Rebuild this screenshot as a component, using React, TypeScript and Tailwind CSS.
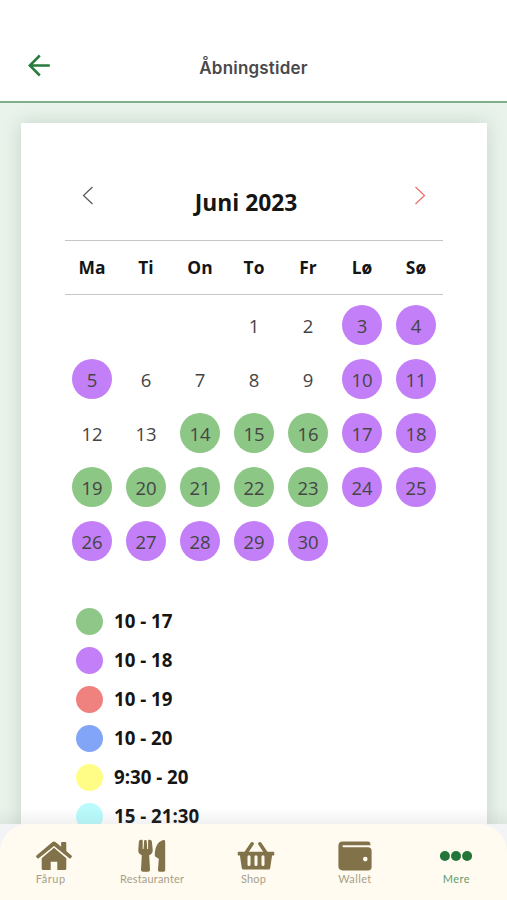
import React from "react";

const weekdays = ["Ma", "Ti", "On", "To", "Fr", "Lø", "Sø"];

// One letter for each day of June: n = closed, p = 10-18, g = 10-17.
const days = "nnpppnnnnppnngggppgggggppppppp";

const dayColors: Record<string, string> = {
  n: "",
  p: "bg-[#c37ff7]",
  g: "bg-[#8cc785]",
};

const legend = [
  { label: "10 - 17", color: "bg-[#8fc788]" },
  { label: "10 - 18", color: "bg-[#c37ff7]" },
  { label: "10 - 19", color: "bg-[#ef827f]" },
  { label: "10 - 20", color: "bg-[#82a5f8]" },
  { label: "9:30 - 20", color: "bg-[#fffd85]" },
  { label: "15 - 21:30", color: "bg-[#b9fbfc]" },
];

function HouseIcon() {
  return (
    <svg className="ml-[6px]" width="38" height="32" viewBox="0 0 38 32" fill="currentColor">
      <path d="M6.700 18.200 19 7.800l12.300 10.400v10.300a1.600 1.600 0 0 1-1.600 1.600h-7.400v-8.300h-6.600v8.300H8.300a1.600 1.600 0 0 1-1.600-1.600Z" />
      <path d="M27 2h3.400a.9.9 0 0 1 .9.9v9.500l-5.200-4.500V2.900A.9.9 0 0 1 27 2Z" />
      <path d="M1.500 15.600 17.200 2.300a2.800 2.800 0 0 1 3.600 0l15.700 13.300c.5.4.6.9.2 1.300l-1 1.300c-.4.5-.9.5-1.400.1L19 5.900 3.700 18.300c-.5.4-1 .4-1.400-.1l-1-1.300c-.4-.4-.3-.9.2-1.300Z" />
    </svg>
  );
}

function CutleryIcon() {
  return (
    <svg width="38" height="36" viewBox="0 0 38 36" fill="currentColor">
      <path d="M7.300 2c1.500-.7 2.400-.2 2.400.8v8.100h.9l.5-8.200c.1-1.100 2.500-1.100 2.600 0l.5 8.200h.9V2.800c0-1 .9-1.500 2.400-.8 1 .4 1.300 1 1.400 2l.8 7.800c.2 3-1 4.400-3.500 5.500l.8 14c.1 1.500-.6 2.400-2 2.400h-5c-1.400 0-2.100-.9-2-2.400l.8-14c-2.500-1.100-3.700-2.500-3.500-5.500l.6-7.800c.1-1 .4-1.600 1.400-2Z" />
      <path d="M29.600 2.300c1.500-.5 2.600 0 2.600 1.600v28.200c0 1.100-.6 1.700-1.700 1.700h-3.800c-1.200 0-1.800-.8-1.700-2l.8-11.100-3-1.700c-.8-.5-1-1-1-1.900 0-7.200 2.300-12.900 7.800-14.800Z" />
    </svg>
  );
}

function BasketIcon() {
  return (
    <svg className="ml-[4px]" width="38" height="32" viewBox="0 0 38 32">
      <path d="m9.200 12.500 5.900-8.700M28.800 12.500l-5.900-8.700" stroke="currentColor" strokeWidth="3.500" strokeLinecap="round" />
      <path
        fillRule="evenodd"
        fill="currentColor"
        d="M1.900 11.700h34.200c.8 0 1.200.4 1.200 1.200v1.400c0 .8-.4 1.200-1.200 1.200h-1l-1.800 11.900c-.2 1.500-1 2.200-2.500 2.200H7.200c-1.500 0-2.300-.7-2.500-2.200L2.900 15.500h-1c-.8 0-1.200-.4-1.200-1.200v-1.400c0-.8.4-1.200 1.200-1.200Zm8.600 5.100v7.800a1.500 1.500 0 0 0 3 0v-7.800a1.500 1.500 0 0 0-3 0Zm7 0v7.800a1.500 1.500 0 0 0 3 0v-7.800a1.500 1.500 0 0 0-3 0Zm7 0v7.800a1.500 1.500 0 0 0 3 0v-7.800a1.500 1.500 0 0 0-3 0Z"
      />
    </svg>
  );
}

function WalletIcon() {
  return (
    <svg width="34" height="30" viewBox="0 0 34 30" fill="currentColor">
      <path
        fillRule="evenodd"
        d="M4.700.5h25.300c1.500 0 2.400.9 2.400 2.500v1.200H5.500c-1.400 0-1.400 2.100 0 2.100H30c2.400 0 3.600 1.200 3.600 3.500v16.100c0 2.300-1.200 3.500-3.600 3.500H4.700C1.900 29.400.4 27.900.4 25V4.900C.4 2 1.900.5 4.700.5Zm22.600 15.300a2.300 2.300 0 1 0 0 4.600 2.300 2.300 0 0 0 0-4.600Z"
      />
    </svg>
  );
}

function DotsIcon() {
  return (
    <svg width="34" height="12" viewBox="0 0 34 12" fill="currentColor">
      <circle cx="5.900" cy="6" r="5" />
      <circle cx="17" cy="6" r="5" />
      <circle cx="28.100" cy="6" r="5" />
    </svg>
  );
}

const tabs = [
  { label: "Fårup", icon: <HouseIcon />, spacing: "tracking-[0.5px]" },
  { label: "Restauranter", icon: <CutleryIcon />, spacing: "tracking-[0.2px]" },
  { label: "Shop", icon: <BasketIcon />, spacing: "tracking-[0.2px]" },
  { label: "Wallet", icon: <WalletIcon />, spacing: "tracking-[0.4px]" },
  { label: "Mere", icon: <DotsIcon />, spacing: "tracking-[0.4px]", active: true },
];

export default function App() {
  return (
    <div className="relative flex h-[900px] w-[507px] flex-col overflow-hidden bg-[#e9f3eb] font-['Open_Sans',sans-serif]">
      <header className="grid h-[103px] shrink-0 grid-cols-[1fr_auto_1fr] items-center border-b-2 border-[#7fb08d] bg-white px-7 pt-[34px]">
        <svg className="-mt-1" width="23" height="23" viewBox="0 0 23 23" fill="none" stroke="#2b7a3d" strokeWidth="2.5">
          <path d="M21.800 11.500H2M11.800 1.500l-10 10 10 10" />
        </svg>
        <h1 className="font-['Inter',sans-serif] text-[17px] leading-6 font-semibold tracking-[0.2px] text-[#49494b]">Åbningstider</h1>
      </header>

      <main className="flex min-h-0 flex-1 px-[21px] pt-5">
        <section className="flex h-[760px] w-[466px] shrink-0 flex-col bg-white px-11 shadow-[0_0_18px_rgba(60,90,70,0.2)]">
          <div className="flex h-[118px] items-start border-b border-[#c5c5c5] px-[17px] pt-[63px]">
            <svg width="12" height="19" viewBox="0 0 12 19" fill="none" stroke="#555" strokeWidth="1.2">
              <path d="m10.500 1-9 8.500 9 8.500" />
            </svg>
            <h2 className="mt-0.5 flex-1 pr-4 text-center text-[22.8px] leading-[30px] font-bold text-[#151515]">Juni 2023</h2>
            <svg width="12" height="19" viewBox="0 0 12 19" fill="none" stroke="#ec6e69" strokeWidth="1.2">
              <path d="m1.500 1 9 8.500-9 8.500" />
            </svg>
          </div>
          <div className="grid h-[54px] grid-cols-7 items-center border-b border-[#c5c5c5] pb-px text-center text-[17.4px] font-bold text-[#151515]">
            {weekdays.map((name) => (
              <span key={name}>{name}</span>
            ))}
          </div>
          <div className="mt-[3px] grid grid-cols-7">
            {[...days].map((kind, i) => (
              <div key={i} className={"flex h-[54px] items-center justify-center " + (i === 0 ? "col-start-4" : "")}>
                <span className={"flex size-10 items-center justify-center rounded-full pt-px text-[18.5px] leading-6 text-[#454545] " + dayColors[kind]}>
                  {i + 1}
                </span>
              </div>
            ))}
          </div>
          <ul className="mt-[33px] pl-[11px]">
            {legend.map(({ label, color }) => (
              <li key={label} className="flex h-[39px] items-center gap-[11px]">
                <span className={"mt-0.5 size-[27px] rounded-full " + color} />
                <span className="text-[18.7px] leading-6 font-bold text-[#151515]">{label}</span>
              </li>
            ))}
          </ul>
        </section>
      </main>

      <div className="absolute inset-x-0 bottom-0 pt-4">
        <div className="absolute inset-x-0 top-0 h-4 bg-gradient-to-b from-transparent to-[#777]/10" />
        <div className="bg-[#f3f4f5]">
          <nav className="flex h-[76px] rounded-t-[28px] bg-[#fffbf0]">
            {tabs.map(({ label, icon, spacing, active }) => (
              <div key={label} className={"flex flex-1 flex-col items-center pt-[14px] " + (active ? "text-[#25753b]" : "text-[#82724a]")}>
                <span className="flex h-[36px] items-center justify-center">{icon}</span>
                <span className={"-mt-[2px] font-['Lato',sans-serif] text-[11px] leading-[14px] " + spacing + (active ? " text-[#629c70]" : " text-[#a89f89]")}>
                  {label}
                </span>
              </div>
            ))}
          </nav>
        </div>
      </div>
    </div>
  );
}
